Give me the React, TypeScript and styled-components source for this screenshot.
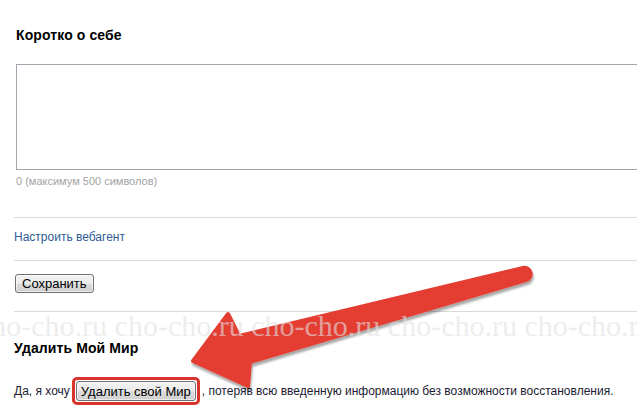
import styled, { createGlobalStyle } from 'styled-components';

const GlobalStyle = createGlobalStyle`
  html, body {
    margin: 0;
    padding: 0;
    background: #fff;
    overflow: hidden;
  }
  body {
    font-family: 'Liberation Sans', Arial, sans-serif;
    color: #1e1e1e;
  }
`;

const App = () => {
  return (
    <Page>
      <GlobalStyle />
      <AboutSection>
        <Heading>Коротко о себе</Heading>
        <AboutField />
        <Counter>0 (максимум 500 символов)</Counter>
      </AboutSection>
      <Divider $top={29} />
      <LinkRow>
        <SettingsLink href='#'>Настроить вебагент</SettingsLink>
      </LinkRow>
      <Divider $top={16} />
      <ButtonRow>
        <WinButton>Сохранить</WinButton>
      </ButtonRow>
      <Divider $top={18} />
      <DeleteSection>
        <Heading>Удалить Мой Мир</Heading>
        <ConfirmLine>
          <span>Да, я хочу</span>
          <Highlight>
            <WinButton>Удалить свой Мир</WinButton>
          </Highlight>
          <span>, потеряв всю введенную информацию без возможности восстановления.</span>
        </ConfirmLine>
      </DeleteSection>

      <Arrow viewBox='0 0 637 419' aria-hidden='true'>
        <defs>
          <filter id='arrowShadow' x='-10%' y='-10%' width='120%' height='130%'>
            <feDropShadow dx='1' dy='3' stdDeviation='1.2' floodColor='#000' floodOpacity='0.35' />
          </filter>
        </defs>
        <path
          d='M193 361 L228 314 L239 336 L523 268 A6 6 0 0 1 526 280 L250 362 L248 386 Z'
          fill='#e43c31'
          stroke='#e43c31'
          strokeWidth='4'
          strokeLinejoin='round'
          filter='url(#arrowShadow)'
        />
      </Arrow>
      <Watermark>cho-cho.ru cho-cho.ru cho-cho.ru cho-cho.ru cho-cho.ru</Watermark>
    </Page>
  );
};

const Page = styled.div`
  position: relative;
  width: 637px;
  height: 419px;
  overflow: hidden;
  padding: 27px 0 0 14px;
  box-sizing: border-box;
`;

const AboutSection = styled.div`
  display: flex;
  flex-direction: column;
  padding-left: 2px;
`;

const Heading = styled.h2`
  margin: 0;
  font-size: 14px;
  line-height: 16px;
  font-weight: bold;
  letter-spacing: 0.1px;
  color: #000;
`;

const AboutField = styled.textarea`
  margin-top: 21px;
  width: 640px;
  height: 106px;
  box-sizing: border-box;
  border: 1px solid #a2a7ad;
  resize: none;
  outline: none;
`;

const Counter = styled.div`
  margin-top: 5px;
  font-size: 11px;
  line-height: 13px;
  color: #a3a3a3;
`;

const Divider = styled.div<{ $top: number }>`
  margin-top: ${(p) => p.$top}px;
  height: 1px;
  background: #dadada;
`;

const LinkRow = styled.div`
  padding-top: 12px;
  font-size: 12px;
  line-height: 14px;
`;

const SettingsLink = styled.a`
  color: #2f5b96;
  text-decoration: none;
`;

const ButtonRow = styled.div`
  display: flex;
  padding: 13px 0 0 1px;
`;

const WinButton = styled.button`
  height: 19px;
  padding: 0 6px;
  font-family: 'Liberation Sans', Arial, sans-serif;
  font-size: 13px;
  line-height: 15px;
  color: #000;
  border: 1px solid #707070;
  border-radius: 3px;
  background: linear-gradient(#f2f2f2 0%, #ebebeb 50%, #dddddd 51%, #cfcfcf 100%);
  box-shadow: inset 0 0 0 1px rgba(255, 255, 255, 0.6);
  cursor: pointer;
`;

const DeleteSection = styled.div`
  display: flex;
  flex-direction: column;
  padding-top: 28px;
  gap: 21px;
`;

const ConfirmLine = styled.div`
  display: flex;
  align-items: center;
  gap: 2px;
  font-size: 12px;
  line-height: 14px;
  color: #1b1b33;
`;

const Highlight = styled.span`
  display: inline-flex;
  padding: 1px;
  border: 3px solid #d8342c;
  border-radius: 5px;

  ${WinButton} {
    height: 20px;
    padding: 0 4px;
  }
`;

const Arrow = styled.svg`
  position: absolute;
  left: 0;
  top: 0;
  width: 637px;
  height: 419px;
  pointer-events: none;
`;

const Watermark = styled.div`
  position: absolute;
  left: -22px;
  top: 313px;
  white-space: nowrap;
  font-family: 'Liberation Serif', 'Times New Roman', serif;
  font-size: 30px;
  line-height: 26px;
  color: rgba(225, 225, 225, 0.62);
  pointer-events: none;
`;

export default App;
